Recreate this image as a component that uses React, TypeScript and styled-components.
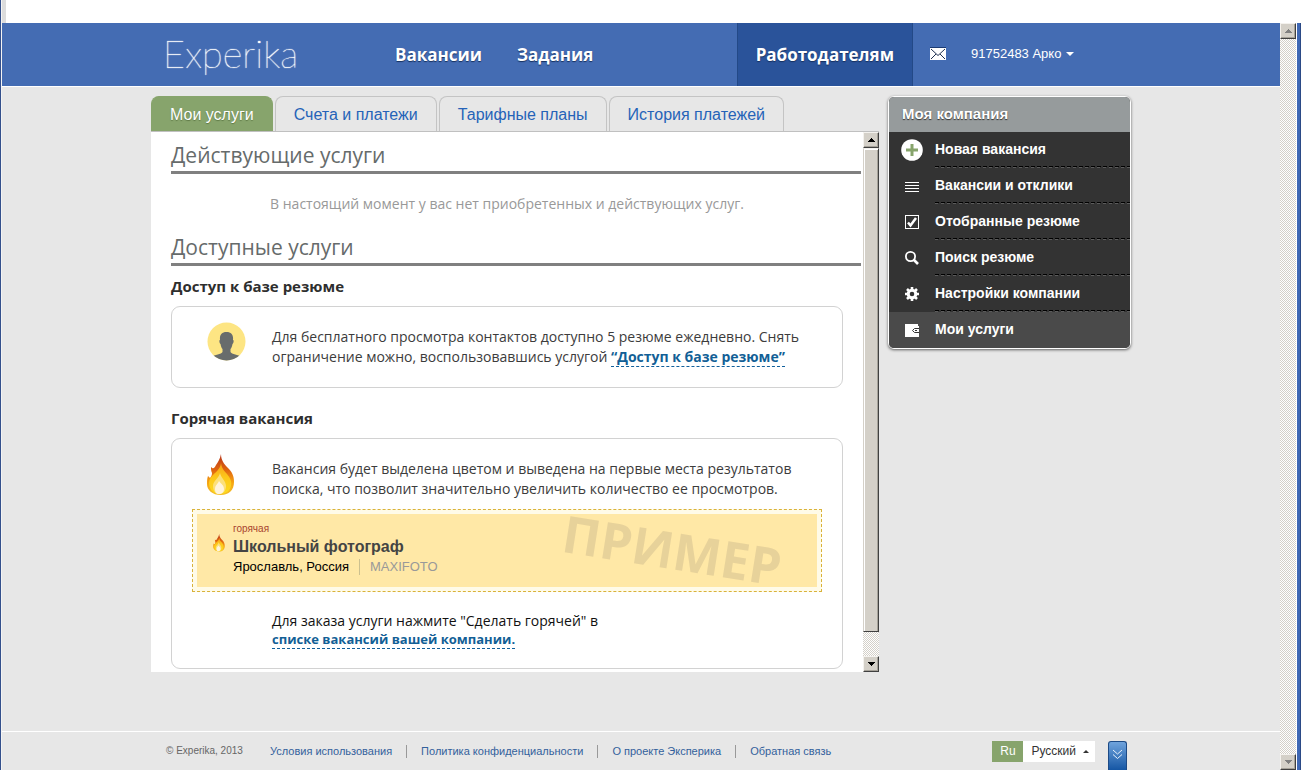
import React from 'react';
import styled, { createGlobalStyle, css } from 'styled-components';

const sans = '"Liberation Sans", Arial, sans-serif';
const humanist = '"Open Sans", "Noto Sans", sans-serif';

const GlobalStyle = createGlobalStyle`
  *, *::before, *::after { box-sizing: border-box; }
  body { margin: 0; background: #e7e7e7; font-family: ${sans}; color: #333; }
  h1, h2, h3, p, ul { margin: 0; padding: 0; }
  ul { list-style: none; }
  button { border: 0; padding: 0; margin: 0; background: none; font: inherit; color: inherit; cursor: pointer; }
  a { text-decoration: none; color: inherit; }
  svg { display: block; }
`;

const Page = styled.div`
  display: flex;
  flex-direction: column;
  min-height: 100vh;
`;

const TopStrip = styled.div`
  flex: none;
  height: 23px;
  background: linear-gradient(90deg, #34508c 1px, #f4f4f4 1px 2px, #dcdcdc 2px 6px, #fff 6px);
`;

const Frame = styled.div`
  flex: 1;
  display: flex;
  border-left: 1px solid #34508c;
`;

const FrameEdge = styled.div`
  width: 5px;
  background: #3f68b4;
  border-left: 1px solid #fff;
  border-right: 1px solid #2b4a86;
`;

const Site = styled.div`
  flex: 1;
  min-width: 0;
  display: flex;
  flex-direction: column;
  border-left: 1px solid #f4f4f4;
`;

const Container = styled.div`
  width: 100%;
  max-width: 980px;
  margin: 0 auto;
`;

const Header = styled.header`
  background: #446cb3;
  border-bottom: 1px solid #fff;
`;

const HeaderRow = styled(Container)`
  display: flex;
  align-items: stretch;
  height: 63px;
  color: #fff;
`;

const Logo = styled.a`
  width: 244px;
  padding: 6px 0 0 12px;
  font: 100 38px/48px Lato, ${humanist};
  text-shadow: 0 0 1px #fff, 0 0 1px #fff;
`;

const NavLinks = styled.nav`
  flex: 1;
  display: flex;
  gap: 35px;
`;

const NavLink = styled.a<{ $active?: boolean }>`
  display: flex;
  align-items: center;
  font: 700 17px/24px ${humanist};
  text-shadow: 0 1px 1px #16305f;
  ${(p) =>
    p.$active &&
    css`
      margin-left: auto;
      padding: 0 18px;
      background: #2a539a;
      border-left: 1px solid #234987;
      border-right: 1px solid #234987;
    `}
`;

const Account = styled.div`
  width: 218px;
  display: flex;
  align-items: center;
  gap: 25px;
  padding: 0 0 2px 17px;
`;

const UserButton = styled.button`
  display: flex;
  align-items: center;
  gap: 5px;
  font: 13px/16px ${sans};
`;

const Caret = styled.span<{ $up?: boolean }>`
  border: solid transparent;
  border-width: ${(p) => (p.$up ? '0 3px 3px' : '4px 4px 0')};
  border-${(p) => (p.$up ? 'bottom' : 'top')}-color: currentColor;
`;

const Body = styled(Container)`
  flex: 1;
  display: flex;
  align-items: flex-start;
  gap: 9px;
  padding: 9px 0 50px;
`;

const Main = styled.main`
  flex: 1;
  min-width: 0;
`;

const Tabs = styled.nav`
  display: flex;
  gap: 2px;
  border-bottom: 1px solid #c0c0c0;
`;

const Tab = styled.a<{ $active?: boolean }>`
  padding: 0 18px;
  height: 35px;
  border: 1px solid #c4c4c4;
  border-bottom: 0;
  border-radius: 8px 8px 0 0;
  font: 16px/35px ${sans};
  color: #2563b8;
  white-space: nowrap;
  ${(p) =>
    p.$active &&
    css`
      background: #87a46c;
      border-color: #87a46c;
      color: #fff;
      text-shadow: 0 1px 1px #5d7845;
    `}
`;

const Panel = styled.div`
  display: flex;
  background: #fff;
`;

const PanelContent = styled.div`
  flex: 1;
  min-width: 0;
  padding: 6px 2px 3px 20px;
`;

const SectionTitle = styled.h2`
  height: 36px;
  border-bottom: 3px solid #808080;
  font: 400 21px/34px ${humanist};
  color: #666b6b;
`;

const Notice = styled.p`
  height: 56px;
  padding: 20px 18px 0 0;
  text-align: center;
  font: 14px/20px ${humanist};
  color: #999;
`;

const ServiceTitle = styled.h3`
  height: 40px;
  padding-top: 10px;
  font: 700 15px/20px ${humanist};
  color: #2e2e2e;
`;

const Card = styled.section<{ $brief?: boolean }>`
  margin-right: 18px;
  margin-bottom: ${(p) => (p.$brief ? '10px' : '0')};
  padding: 15px 20px ${(p) => (p.$brief ? '10px' : '20px')};
  border: 1px solid #d2d2d2;
  border-radius: 9px;
`;

const CardIntro = styled.div`
  display: flex;
  gap: 26px;
  padding-left: 15px;
`;

const CardIcon = styled.div`
  flex: none;
  width: 39px;
`;

const CardText = styled.p`
  padding: 5px 0 10px;
  font: 14px/20px ${humanist};
  color: #3c3c3c;
`;

const DashedLink = styled.a<{ $compact?: boolean }>`
  border-bottom: 1px dashed #11609c;
  font-size: ${(p) => (p.$compact ? '13px' : '14px')};
  font-weight: 700;
  color: #125f96;
`;

const Sample = styled.div`
  padding: 4px;
  border: 1px dashed #d9b23a;
  background: #fffbe8;
`;

const SampleBody = styled.div`
  position: relative;
  display: flex;
  align-items: flex-start;
  gap: 7px;
  height: 73px;
  padding: 8px 15px;
  background: #ffe8a6;
`;

const SampleIcon = styled.div`
  padding-top: 12px;
`;

const HotLabel = styled.p`
  font: 10px/13px ${sans};
  color: #a8432e;
`;

const VacancyTitle = styled.h3`
  font: 700 16px/24px ${sans};
  color: #444;
`;

const VacancyMeta = styled.p`
  display: flex;
  align-items: center;
  font: 13px/16px ${sans};
  color: #000;
`;

const Company = styled.span`
  margin-left: 10px;
  padding-left: 10px;
  border-left: 1px solid #ccc08f;
  color: #999;
`;

const Watermark = styled.span`
  position: absolute;
  top: 9px;
  right: 34px;
  font: 700 51px/52px ${humanist};
  color: rgba(120, 110, 100, 0.18);
  transform: rotate(9deg);
`;

const OrderNote = styled.p`
  padding: 20px 0 0 80px;
  font: 14px/18px ${humanist};
  color: #111;
`;

const ScrollTrack = styled.div`
  flex: none;
  width: 16px;
  display: flex;
  flex-direction: column;
  background: repeating-conic-gradient(#d4d0c8 0 25%, #fff 0 50%) 0 0 / 2px 2px;
`;

const ScrollButton = styled.button`
  flex: none;
  display: flex;
  align-items: center;
  justify-content: center;
  height: 16px;
  background: #d4d0c8;
  border: 1px solid;
  border-color: #f4f2ee #404040 #404040 #f4f2ee;
  box-shadow: inset -1px -1px 0 #a5a198;
`;

const ScrollThumb = styled.div`
  flex: 1;
  margin-bottom: 24px;
  background: #d4d0c8;
  border: 1px solid;
  border-color: #f4f2ee #404040 #404040 #d4d0c8;
  box-shadow: inset 1px 1px 0 #fff, inset -1px 0 0 #a5a198;
`;

const ScrollSpace = styled.div`
  flex: 1;
`;

const Sidebar = styled.aside`
  flex: none;
  width: 243px;
  overflow: hidden;
  border: 1px solid #fff;
  border-radius: 6px;
  background: #333;
  box-shadow: 0 1px 3px rgba(0, 0, 0, 0.6);
`;

const SidebarTitle = styled.h2`
  height: 35px;
  padding-left: 13px;
  background: #969b9c;
  font: 700 15px/34px ${sans};
  color: #fff;
  text-shadow: 0 1px 1px #333;
`;

const MenuItem = styled.li<{ $active?: boolean }>`
  background: ${(p) => (p.$active ? '#4a4a4a' : 'transparent')};
`;

const MenuLink = styled.a`
  display: flex;
  align-items: stretch;
  height: 36px;
`;

const MenuIcon = styled.span`
  width: 46px;
  display: flex;
  align-items: center;
  justify-content: center;
`;

const MenuLabel = styled.span<{ $last?: boolean }>`
  flex: 1;
  position: relative;
  font: 700 14px/35px ${sans};
  color: #fff;
  &::after {
    content: '';
    display: ${(p) => (p.$last ? 'none' : 'block')};
    position: absolute;
    inset: auto 0 0;
    height: 2px;
    background:
      repeating-linear-gradient(90deg, #000 0 4px, transparent 4px 6px) 0 0 / 100% 1px no-repeat,
      repeating-linear-gradient(90deg, #5c5c5c 0 3px, transparent 3px 6px) 0 1px / 100% 1px no-repeat;
  }
`;

const Footer = styled.footer`
  border-top: 1px solid #fff;
`;

const FooterRow = styled(Container)`
  display: flex;
  height: 38px;
  padding: 9px 4px 0 15px;
  font: 11px/20px ${sans};
`;

const Copyright = styled.span`
  width: 104px;
  font-size: 10px;
  color: #666;
`;

const FooterLinks = styled.ul`
  flex: 1;
  display: flex;
  align-items: flex-start;
  color: #33619c;
`;

const FooterItem = styled.li`
  display: flex;
  align-items: center;
  & + &::before {
    content: '';
    width: 1px;
    height: 13px;
    margin: 0 14px;
    background: #999;
  }
`;

const Language = styled.button`
  display: flex;
  height: 21px;
  margin-right: 13px;
  background: #fff;
  font: 12px/21px ${sans};
`;

const LanguageCode = styled.span`
  width: 31px;
  background: #87a46c;
  color: #fff;
`;

const LanguageName = styled.span`
  display: flex;
  align-items: center;
  gap: 7px;
  padding: 0 6px 0 8px;
`;

const Expand = styled.button`
  width: 19px;
  height: 29px;
  display: flex;
  justify-content: center;
  padding-top: 7px;
  border: 1px solid #1c4a86;
  border-bottom: 0;
  border-radius: 3px 3px 0 0;
  background: linear-gradient(#6fa3dc, #1556a4);
`;

const Arrow = ({ up, color }: { up?: boolean; color: string }) => (
  <svg width="7" height="4" viewBox="0 0 7 4" fill={color} aria-hidden="true">
    <path d={up ? 'M3 0h1v1h1v1h1v1h1v1H0V3h1V2h1V1h1z' : 'M0 0h7v1H6v1H5v1H4v1H3V3H2V2H1V1H0z'} />
  </svg>
);

const Flame = ({ id, width, height }: { id: string; width: number; height: number }) => (
  <svg width={width} height={height} viewBox="0 0 27 42" aria-hidden="true">
    <defs>
      <linearGradient id={`${id}-outer`} x1="0" y1="0" x2="0" y2="1">
        <stop offset="0" stopColor="#b8351a" />
        <stop offset="0.4" stopColor="#e0660f" />
        <stop offset="0.7" stopColor="#f6a512" />
        <stop offset="1" stopColor="#f4c02a" />
      </linearGradient>
      <linearGradient id={`${id}-inner`} x1="0" y1="0" x2="0" y2="1">
        <stop offset="0" stopColor="#f6a01a" />
        <stop offset="0.5" stopColor="#fdc81a" />
        <stop offset="1" stopColor="#fddb1e" />
      </linearGradient>
    </defs>
    <path fill={`url(#${id}-outer)`} d="M14 0c0 6 3 10 7 14 4 4 6 8 6 14 0 8-5 13-13 13C5 41 0 36 0 30c0-3 0-5 1-8l2 2c1-1 2-3 2-5-1-2-1-4-1-6 2 2 3 2 5-2 2-3 4-6 5-11z" />
    <path fill={`url(#${id}-inner)`} d="M14 8c0 5 3 9 6 12 3 4 5 7 4 12-1 5-5 8-11 8-7 0-11-5-11-11 0-3 1-5 4-8 4-4 8-7 8-13z" />
    <path fill="#fce07a" d="M13 19c1 5 6 8 6 13 0 5-3 8-7 8s-6-4-6-8c0-5 6-8 7-13z" />
    <path fill="#fff4dc" d="M12 27c2 3 5 4 5 8 0 3-2 5-5 5s-4-2-4-5c0-4 3-5 4-8z" />
  </svg>
);

const Avatar = () => (
  <svg width="39" height="39" viewBox="0 0 39 39" aria-hidden="true">
    <defs>
      <clipPath id="avatar-disc"><circle cx="19.5" cy="19.5" r="19" /></clipPath>
    </defs>
    <g clipPath="url(#avatar-disc)">
      <rect width="39" height="39" fill="#fde583" />
      <path fill="#686c6c" d="M19.500 10c5 0 7 3 6.500 8 1 0 .8 3-.5 4-.5 2.500-1 4-2 5v3c1 2.500 8 2.500 11 5v5H4.500v-5c3-2.500 10-2.500 11-5v-3c-1-1-1.500-2.500-2-5-1.300-1-1.500-4-.5-4-.5-5 1.500-8 6.500-8z" />
    </g>
  </svg>
);

const Envelope = () => (
  <svg width="16" height="13" viewBox="0 0 16 13" aria-hidden="true">
    <path fill="#1b3a73" d="M0 0h16v2H0z" />
    <path fill="#fff" d="M0 1h16v12H0z" />
    <path fill="none" stroke="#1f3050" d="M1 2l7 6.500L15 2M1 12l5-5M15 12l-5-5" />
  </svg>
);

const PlusIcon = () => (
  <svg width="22" height="22" viewBox="0 0 22 22" aria-hidden="true">
    <circle cx="11" cy="11" r="10.800" fill="#fff" />
    <path fill="#87a46c" d="M9.500 5h3v4.500H17v3h-4.500V17h-3v-4.500H5v-3h4.500z" />
  </svg>
);

const ListIcon = () => (
  <svg width="14" height="14" viewBox="0 0 14 14" fill="#fff" aria-hidden="true">
    <path d="M0 3h14v1H0zM0 6h14v1H0zM0 9h14v1H0zM0 12h14v1H0z" />
  </svg>
);

const CheckIcon = () => (
  <svg width="14" height="14" viewBox="0 0 14 14" fill="none" stroke="#fff" aria-hidden="true">
    <rect x="0.500" y="0.500" width="13" height="13" />
    <path strokeWidth="2.500" d="M3 7.500L5.500 10.500 11 3" />
  </svg>
);

const SearchIcon = () => (
  <svg width="14" height="14" viewBox="0 0 14 14" fill="none" stroke="#fff" aria-hidden="true">
    <circle cx="5.500" cy="5.500" r="4.600" strokeWidth="1.800" />
    <path strokeWidth="2.600" d="M8.500 8.500l4.500 4.500" />
  </svg>
);

const GearIcon = () => (
  <svg width="14" height="14" viewBox="0 0 14 14" aria-hidden="true">
    <g stroke="#fff" strokeWidth="2.600">
      <path d="M7 0v3M7 11v3M0 7h3M11 7h3M2 2l2.200 2.200M9.800 9.800L12 12M12 2L9.800 4.200M4.200 9.800L2 12" />
    </g>
    <circle cx="7" cy="7" r="3.800" fill="none" stroke="#fff" strokeWidth="3" />
  </svg>
);

const WalletIcon = () => (
  <svg width="14" height="14" viewBox="0 0 14 14" aria-hidden="true">
    <path fill="#fff" d="M0 1h13v2h1v11H0z" />
    <path fill="#fff" stroke="#333" d="M14 5.500H9.500L7.500 7.500 9.500 9.500H14" />
    <path fill="#333" d="M10 7h2v1h-2z" />
  </svg>
);

const DoubleChevron = () => (
  <svg width="11" height="11" viewBox="0 0 11 11" fill="none" stroke="#e8f2fc" aria-hidden="true">
    <path d="M1 1l4.500 4L10 1M1 5.500l4.500 4L10 5.500" />
  </svg>
);

const navItems = ['Вакансии', 'Задания', 'Работодателям'];
const tabs = ['Мои услуги', 'Счета и платежи', 'Тарифные планы', 'История платежей'];
const menu = [
  { label: 'Новая вакансия', icon: <PlusIcon /> },
  { label: 'Вакансии и отклики', icon: <ListIcon /> },
  { label: 'Отобранные резюме', icon: <CheckIcon /> },
  { label: 'Поиск резюме', icon: <SearchIcon /> },
  { label: 'Настройки компании', icon: <GearIcon /> },
  { label: 'Мои услуги', icon: <WalletIcon /> },
];
const footerLinks = ['Условия использования', 'Политика конфиденциальности', 'О проекте Эксперика', 'Обратная связь'];

export default function App() {
  return (
    <Page>
      <GlobalStyle />
      <TopStrip />
      <Frame>
        <Site>
          <Header>
            <HeaderRow>
              <Logo href="#">Experika</Logo>
              <NavLinks>
                {navItems.map((item, i) => (
                  <NavLink key={item} href="#" $active={i === 2}>{item}</NavLink>
                ))}
              </NavLinks>
              <Account>
                <a href="#" aria-label="Сообщения"><Envelope /></a>
                <UserButton type="button">91752483 Арко <Caret /></UserButton>
              </Account>
            </HeaderRow>
          </Header>

          <Body>
            <Main>
              <Tabs>
                {tabs.map((tab, i) => (
                  <Tab key={tab} href="#" $active={i === 0}>{tab}</Tab>
                ))}
              </Tabs>
              <Panel>
                <PanelContent>
                  <SectionTitle>Действующие услуги</SectionTitle>
                  <Notice>В настоящий момент у вас нет приобретенных и действующих услуг.</Notice>
                  <SectionTitle>Доступные услуги</SectionTitle>

                  <ServiceTitle>Доступ к базе резюме</ServiceTitle>
                  <Card $brief>
                    <CardIntro>
                      <CardIcon><Avatar /></CardIcon>
                      <CardText>
                        Для бесплатного просмотра контактов доступно 5 резюме ежедневно. Снять<br />
                        ограничение можно, воспользовавшись услугой{' '}
                        <DashedLink href="#">“Доступ к базе резюме”</DashedLink>
                      </CardText>
                    </CardIntro>
                  </Card>

                  <ServiceTitle>Горячая вакансия</ServiceTitle>
                  <Card>
                    <CardIntro>
                      <CardIcon><Flame id="flame-large" width={27} height={42} /></CardIcon>
                      <CardText>
                        Вакансия будет выделена цветом и выведена на первые места результатов<br />
                        поиска, что позволит значительно увеличить количество ее просмотров.
                      </CardText>
                    </CardIntro>
                    <Sample>
                      <SampleBody>
                        <SampleIcon><Flame id="flame-small" width={14} height={18} /></SampleIcon>
                        <div>
                          <HotLabel>горячая</HotLabel>
                          <VacancyTitle>Школьный фотограф</VacancyTitle>
                          <VacancyMeta>Ярославль, Россия<Company>MAXIFOTO</Company></VacancyMeta>
                        </div>
                        <Watermark>ПРИМЕР</Watermark>
                      </SampleBody>
                    </Sample>
                    <OrderNote>
                      Для заказа услуги нажмите "Сделать горячей" в<br />
                      <DashedLink href="#" $compact>списке вакансий вашей компании.</DashedLink>
                    </OrderNote>
                  </Card>
                </PanelContent>
                <ScrollTrack>
                  <ScrollButton type="button" aria-label="Вверх"><Arrow up color="#000" /></ScrollButton>
                  <ScrollThumb />
                  <ScrollButton type="button" aria-label="Вниз"><Arrow color="#000" /></ScrollButton>
                </ScrollTrack>
              </Panel>
            </Main>

            <Sidebar>
              <SidebarTitle>Моя компания</SidebarTitle>
              <ul>
                {menu.map((item, i) => (
                  <MenuItem key={item.label} $active={i === menu.length - 1}>
                    <MenuLink href="#">
                      <MenuIcon>{item.icon}</MenuIcon>
                      <MenuLabel $last={i === menu.length - 1}>{item.label}</MenuLabel>
                    </MenuLink>
                  </MenuItem>
                ))}
              </ul>
            </Sidebar>
          </Body>

          <Footer>
            <FooterRow>
              <Copyright>© Experika, 2013</Copyright>
              <FooterLinks>
                {footerLinks.map((link) => (
                  <FooterItem key={link}><a href="#">{link}</a></FooterItem>
                ))}
              </FooterLinks>
              <Language type="button">
                <LanguageCode>Ru</LanguageCode>
                <LanguageName>Русский <Caret $up /></LanguageName>
              </Language>
              <Expand type="button" aria-label="Развернуть"><DoubleChevron /></Expand>
            </FooterRow>
          </Footer>
        </Site>
        <ScrollTrack>
          <ScrollButton type="button" aria-label="Прокрутить вверх"><Arrow up color="#808080" /></ScrollButton>
          <ScrollSpace />
          <ScrollButton type="button" aria-label="Прокрутить вниз"><Arrow color="#808080" /></ScrollButton>
        </ScrollTrack>
        <FrameEdge />
      </Frame>
    </Page>
  );
}
